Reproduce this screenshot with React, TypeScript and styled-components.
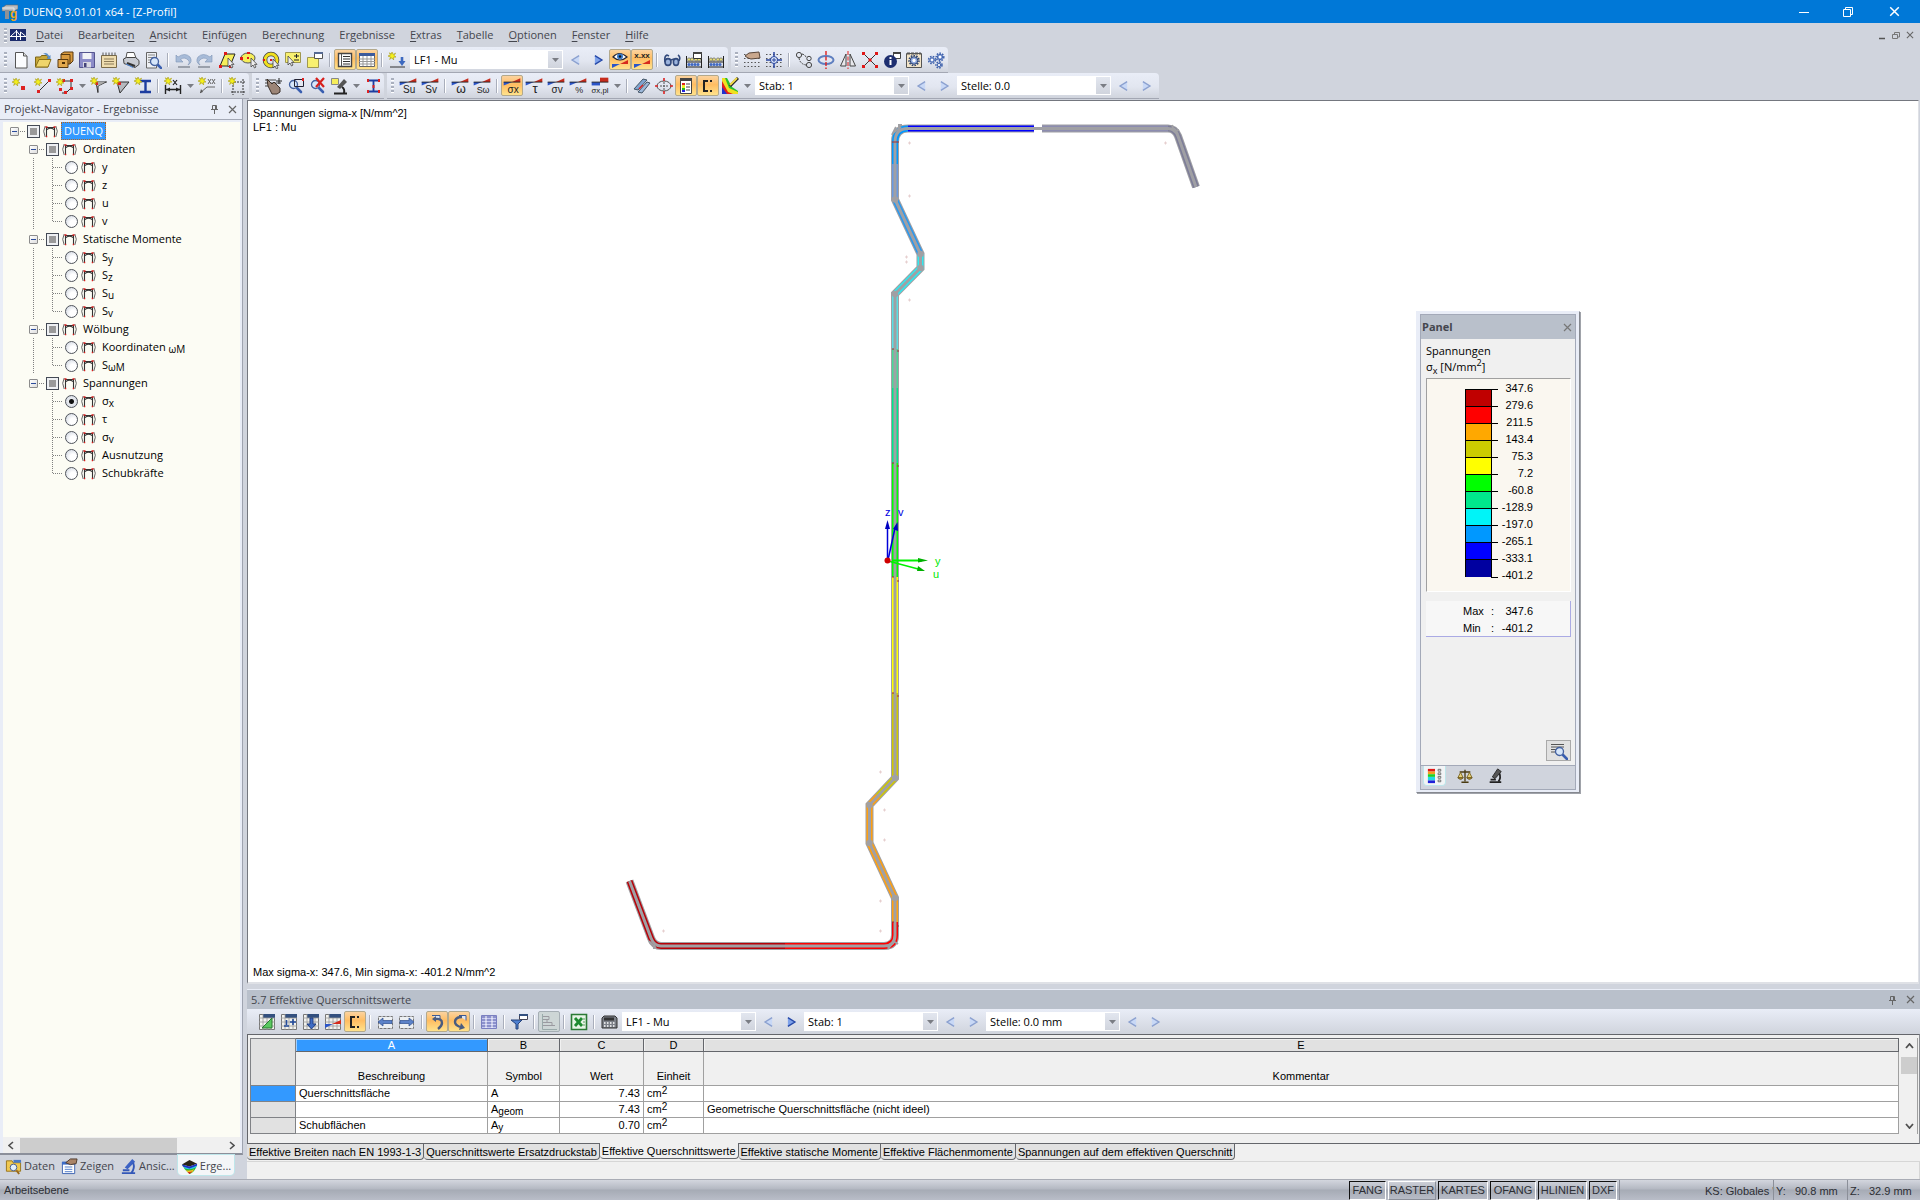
import React from 'react';
import styled, { createGlobalStyle, css } from 'styled-components';

const ui = '"Open Sans", "Noto Sans", sans-serif';
const arial = '"Liberation Sans", Arial, sans-serif';
const chrome = '#d0d4dd';
const face = '#f0f0f0';

const Global = createGlobalStyle`
  *, *::before, *::after { box-sizing: border-box; }
  html, body, #root { height: 100%; }
  body { margin: 0; background: ${chrome}; font: 11px/16px ${ui}; color: #000; overflow: hidden; }
  button, input, select { font: inherit; color: inherit; margin: 0; padding: 0; }
  svg { display: block; flex: none; }
`;

const Shell = styled.div`
  display: flex; flex-direction: column; height: 100vh; min-width: 1240px; overflow: hidden;
`;

/* ---------- title and menu ---------- */
const TitleBar = styled.header`
  flex: none; height: 23px; display: flex; align-items: center; background: #0078d7; color: #fff; padding: 0 2px;
`;
const Title = styled.h1`
  font-size: 11px; font-weight: 400; margin: 0 0 0 5px; padding-top: 1px; flex: 1;
`;
const WinButton = styled.button<{ $w?: number }>`
  width: ${p => p.$w ?? 44}px; height: 100%; border: 0; background: none; display: grid; place-items: center;
`;
const MenuBar = styled.nav`
  flex: none; height: 24px; display: flex; align-items: center; background: ${chrome}; color: #44464e; padding-right: 3px;
`;
const MenuItems = styled.div`
  flex: 1; display: flex; gap: 15px; padding-left: 10px;
`;
const MenuItem = styled.button`
  border: 0; background: none; padding: 0; font-size: 11px; line-height: 20px;
  u { text-underline-offset: 2px; }
`;
const Spacer = styled.div`flex: 1;`;

/* ---------- toolbars ---------- */
const ToolRow = styled.div`
  flex: none; height: 26px; display: flex; gap: 3px; background: ${chrome};
`;
const Bar = styled.div<{ $pad?: number }>`
  display: flex; align-items: center; height: 26px; padding-right: ${p => p.$pad ?? 1}px;
  background: linear-gradient(#e9edf7, #e2e6f0 55%, #d0d4dd);
  border-bottom: 1px solid #a3a7b3; border-radius: 0 4px 0 0;
`;
const Grip = styled.span`
  width: 3px; height: 15px; margin: 0 3px 0 4px; flex: none;
  background: repeating-linear-gradient(#aab0be 0 2px, #fff 2px 3px, transparent 3px 4px);
`;
const Sep = styled.span`
  flex: none; width: 2px; height: 14px; margin: 0 3px; background: #a9aebb; border-right: 1px solid #fff;
`;
const Tool = styled.button<{ $on?: boolean; $grey?: boolean }>`
  flex: none; width: 22px; height: 21px; display: grid; place-items: center; background: none;
  border: 1px solid transparent; border-radius: 2px;
  ${p => p.$on && css`border-color: #b3a98c; background: linear-gradient(#fbd3a0, #ffbd62 45%, #ffe28c);`}
  ${p => p.$grey && css`border-color: #a5aeb4; background: #cdd6d6;`}
`;
const Drop = styled.button`
  flex: none; width: 12px; height: 20px; border: 0; background: none; display: grid; place-items: center;
`;
const Combo = styled.span<{ $w: number }>`
  position: relative; flex: none; width: ${p => p.$w}px; height: 19px; margin: 0 2px; display: flex;
  background: #fff; border: 1px solid #fff;
  select {
    appearance: none; width: 100%; border: 0; outline: 0; background: none; padding-left: 3px; font-size: 11px; line-height: 16px;
  }
`;
const ComboArrow = styled.span`
  position: absolute; right: 0; top: 0; bottom: 0; width: 14px; pointer-events: none;
  display: grid; place-items: center; background: linear-gradient(#e2e6ef, #d0d4dd);
`;

/* ---------- work area ---------- */
const Main = styled.div`flex: 1; min-height: 0; display: flex; gap: 4px; background: ${chrome};`;
const Side = styled.aside`
  width: 243px; flex: none; display: flex; flex-direction: column;
`;
const SideBox = styled.div`
  flex: 1; min-height: 0; display: flex; flex-direction: column; border-right: 1px solid #9ea3b0; border-bottom: 2px solid #8b8f9a; background: #e9edf7;
`;
const SideHead = styled.div`
  height: 21px; flex: none; display: flex; align-items: center; gap: 9px; padding: 0 5px 0 4px; border-bottom: 1px solid #a3a8b5;
  color: #44464e; h2 { font-size: 11px; font-weight: 400; margin: 0; flex: 1; }
`;
const PlainBtn = styled.button`border: 0; background: none; padding: 0; display: grid; place-items: center;`;
const Tree = styled.div`
  flex: 1; margin: 2px 2px 0 3px; background: #fcfcf4; overflow: hidden;
`;
const HScroll = styled.div`
  height: 16px; flex: none; margin: 0 2px 0 3px; padding: 0 2px; gap: 3px; background: ${face}; display: flex; align-items: center;
`;
const Thumb = styled.div`width: 157px; height: 15px; background: #cdcdcd;`;
const SideTabs = styled.div`height: 24px; flex: none; display: flex; align-items: flex-start; padding-left: 2px; color: #44464e;`;
const SideTab = styled.button<{ $on?: boolean }>`
  height: 20px; padding: 2px 3px 0; display: flex; align-items: center; gap: 2px; border: 0; background: none; white-space: nowrap;
  border-radius: 0 0 4px 4px; svg { width: 17px; height: 17px; }
  ${p => p.$on && css`background: #f4f6f8; box-shadow: 0 0 0 1px #bfe6ea;`}
`;

const Row = styled.div`display: flex; align-items: center; height: 18px;`;
const Guide = styled.span<{ $v?: 'full' | 'half' | 'none'; $h?: boolean; $w: number }>`
  flex: none; width: ${p => p.$w}px; height: 18px;
  background-repeat: no-repeat;
  background-image:
    ${p => p.$v === 'none' || !p.$v ? 'none' : 'repeating-linear-gradient(#808080 0 1px, transparent 1px 2px)'},
    ${p => p.$h ? 'repeating-linear-gradient(90deg, #808080 0 1px, transparent 1px 2px)' : 'none'};
  background-position: 11px 0, 12px 9px;
  background-size: 1px ${p => (p.$v === 'half' ? 10 : 18)}px, 10px 1px;
`;
const Expander = styled.button`
  flex: none; width: 9px; height: 9px; border: 1px solid #8c8c8c; border-radius: 1px; background: linear-gradient(135deg, #fff, #ddd);
  display: grid; place-items: center; &::before { content: ''; width: 5px; height: 1px; background: #2b4b9b; }
`;
const ExpCell = styled.span<{ $left: number }>`
  flex: none; display: flex; align-items: center; padding-left: ${p => p.$left}px; padding-top: 1px; padding-right: 1px;
  &::after { content: ''; width: 6px; height: 1px; margin-left: 1px; background: repeating-linear-gradient(90deg, #808080 0 1px, transparent 1px 2px); }
`;
const Check = styled.input`
  appearance: none; flex: none; width: 13px; height: 13px; border: 1px solid #444a55; background: #999; box-shadow: inset 0 0 0 2px #eef0f3;
`;
const Radio = styled.input`
  appearance: none; flex: none; width: 13px; height: 13px; border-radius: 50%; border: 1px solid #50545c;
  background: radial-gradient(circle at 65% 65%, #fff 30%, #c9d0dc);
  &:checked { background: radial-gradient(circle, #111 0 2px, #e8ebf0 3px, #cdd3dd); }
`;
const Label = styled.label<{ $sel?: boolean }>`
  display: flex; align-items: center; gap: 3px; height: 18px; white-space: nowrap; padding-left: 3px; font-size: 11px;
  > span { padding: 0 3px; line-height: 18px; }
  sub { font-size: 10px; line-height: 1px; vertical-align: -2px; }
  ${p => p.$sel && css`> span { background: #3399ff; color: #fff; outline: 1px dotted #b5651d; outline-offset: -1px; }`}
`;

/* ---------- drawing ---------- */
const Right = styled.div`flex: 1; min-width: 0; display: flex; flex-direction: column;`;
const Canvas = styled.section`
  flex: 1; min-height: 0; position: relative; background: #fff; border: 1px solid #74777f; border-right-color: #dfe1e6; border-bottom: 2px solid #dfe1e6; margin-top: 1px; margin-right: 1px;
  font: 11px/14px ${arial};
  > svg { width: 100%; height: 100%; }
`;
const CanvasNote = styled.div<{ $bottom?: boolean }>`
  position: absolute; left: 5px; ${p => (p.$bottom ? 'bottom: 3px' : 'top: 5px')};
`;

const Floating = styled.section`
  position: absolute; right: 338px; top: 210px; width: 164px; height: 482px; display: flex; flex-direction: column;
  background: #e9edf7; border: 1px solid #e9edf7; border-right-color: #85888f; border-bottom-color: #85888f; padding: 2px 3px;
  font: 11px/14px ${arial}; box-shadow: 1px 1px 0 #a0a3aa;
`;
const FloatInner = styled.div`flex: 1; display: flex; flex-direction: column; border: 1px solid #a3a9b8; background: ${face};`;
const FloatHead = styled.div`
  height: 24px; display: flex; align-items: center; justify-content: space-between; background: #b9c0cb; color: #44464e; padding: 0 3px 0 1px;
  h2 { margin: 0; font: 700 11px/16px ${ui}; }
`;
const FloatBody = styled.div`flex: 1; padding: 4px 4px 4px 5px; display: flex; flex-direction: column;`;
const FloatName = styled.div`
  font: 11px/16px ${ui}; sub, sup { font-size: 9px; line-height: 1px; }
`;
const LegendBox = styled.div`
  margin-top: 3px; height: 214px; background: #faf7f0; border: 1px solid #a0a0a0; border-right-color: #fff; border-bottom-color: #fff;
  padding: 10px 37px 0 38px; display: flex; justify-content: space-between;
`;
const Swatches = styled.div`width: 27px; border: 1px solid #000; height: 188px;`;
const Swatch = styled.div<{ $c: string }>`
  height: 17px; background: ${p => p.$c}; border-bottom: 1px solid #000; position: relative;
  &::after { content: ''; position: absolute; left: 25px; bottom: -1px; width: 7px; height: 1px; background: #000; }
  &:first-child::before { content: ''; position: absolute; left: 25px; top: -1px; width: 7px; height: 1px; background: #000; }
  &:last-child { border-bottom: 0; }
`;
const Values = styled.ol`
  list-style: none; margin: -9px 0 0; padding: 0; text-align: right; line-height: 17px;
`;
const MinMax = styled.dl`
  margin: 9px 0 0; height: 36px; padding: 2px 37px 0 37px; background: #f7f7f7; border: solid #aaaae4; border-width: 0 1px 1px 0;
  display: grid; grid-template-columns: 34px 1fr; line-height: 17px; 
  dt { display: flex; justify-content: space-between; padding-right: 3px; white-space: pre; } dd { margin: 0; text-align: right; }
`;
const FindBtn = styled.button`
  margin-top: auto; align-self: flex-end; width: 25px; height: 21px; border: 1px solid #a9a9a9; background: #e1e1e1; display: grid; place-items: center;
`;
const FloatTabs = styled.div`
  height: 24px; background: ${chrome}; border-top: 1px solid #a3a9b8; display: flex; padding-left: 2px; gap: 7px;
`;
const FloatTab = styled.button<{ $on?: boolean }>`
  width: 23px; height: 20px; border: 0; background: none; display: grid; place-items: center; border-radius: 0 0 4px 4px;
  svg { width: 16px; height: 16px; }
  ${p => p.$on && css`background: #f2f4f6; border: 1px solid #bfe6ea; border-top: 0;`}
`;

/* ---------- table panel ---------- */
const Dock = styled.section`flex: none; margin-top: 5px; display: flex; flex-direction: column; background: ${face};`;
const DockHead = styled.div`
  height: 20px; display: flex; align-items: center; gap: 9px; padding: 0 5px 0 4px; background: #b9c0cb; color: #44464e; border-top: 1px solid #e9edf7;
  h2 { margin: 0; flex: 1; font-size: 11px; font-weight: 400; }
`;
const DockBar = styled.div`
  height: 25px; display: flex; align-items: center; padding-left: 9px; background: linear-gradient(#e9edf7, #d0d4dd);
`;
const GridWrap = styled.div`
  display: flex; height: 110px; padding: 3px 1px 0 2px; border: 1px solid #64666b; border-right-color: #8b8d92; gap: 2px;
`;
const Table = styled.table`
  flex: 1; border-collapse: collapse; table-layout: fixed; font: 11px/14px ${arial}; background: #fff; height: 96px;
  td, th { border: 1px solid #a0a0a0; padding: 0 3px; font-weight: 400; height: 16px; white-space: nowrap; overflow: hidden; line-height: 13px; }
  sub, sup { font-size: 10px; line-height: 1px; }
  sub { vertical-align: -2px; } sup { vertical-align: 3px; }
`;
const Letter = styled.th<{ $on?: boolean }>`
  && { height: 13px; line-height: 12px; border-color: #64666b; }
  background: ${p => (p.$on ? '#3399ff' : '#e1e1e1')}; color: ${p => (p.$on ? '#fff' : '#000')};
  box-shadow: inset 1px 1px 0 #fff8;
`;
const HeadCell = styled.th`&& { height: 34px; padding-bottom: 2px; } background: ${face}; vertical-align: bottom;`;
const RowHead = styled.th<{ $on?: boolean }>`
  background: ${p => (p.$on ? '#3399ff' : '#e1e1e1')}; && { border-color: #808286; }
`;
const Corner = styled.th`background: #e1e1e1; && { border-color: #808286; }`;
const Num = styled.td`text-align: right;`;
const VScroll = styled.div`
  width: 17px; flex: none; height: 96px; display: flex; flex-direction: column; align-items: center; justify-content: space-between; background: ${face};
  padding: 5px 0; border-right: 1px solid #a0a0a0;
`;
const VThumb = styled.div`width: 16px; height: 17px; background: #cdcdcd; margin-bottom: 42px;`;
const SheetTabs = styled.div`height: 18px; display: flex; align-items: flex-start; border-bottom: 1px solid #d6d6d6; font: 11px/14px ${arial};`;
const SheetTab = styled.button<{ $on?: boolean }>`
  height: 16px; border: 1px solid #64666b; border-top: 0; border-left: 0; padding: 0 2px; background: #e1e1e1; white-space: nowrap;
  border-radius: 0 0 4px 4px;
  ${p => p.$on && css`background: ${face}; margin-top: -1px;`}
`;
const DockFoot = styled.div`height: 17px; border-right: 1px solid #d6d6d6;`;

/* ---------- status ---------- */
const Status = styled.footer`
  flex: none; height: 21px; display: flex; align-items: stretch; border-top: 1px solid #a9acb5;
  background: linear-gradient(#d3d6de, #b4b8c2 45%, #a6abb5 50%, #b9bdc8); font: 11px/19px ${arial}; color: #2c2e34;
`;
const StatusText = styled.span`flex: 1; padding: 2px 4px 0; line-height: 17px;`;
const Mode = styled.button<{ $w: number; $up?: boolean }>`
  width: ${p => p.$w}px; height: 19px; margin: 1px 2px 0 0; background: none; text-align: center; white-space: nowrap;
  border: 1px solid; border-color: ${p => (p.$up ? '#fff #8b8f99 #8b8f99 #fff' : '#111 #fff #fff #111')};
  line-height: 17px;
`;
const Coord = styled.span<{ $w: number; $pad: number }>`
  width: ${p => p.$w}px; padding: 3px 0 0 ${p => p.$pad}px; line-height: 16px; border-left: 1px solid #8b8f99; white-space: pre;
`;

/* ---------- icons ---------- */
const Svg = ({ children, s = 18, ...r }: { children: React.ReactNode; s?: number } & React.SVGProps<SVGSVGElement>) => (
  <svg width={s} height={s} viewBox="0 0 18 18" fill="none" aria-hidden="true" {...r}>{children}</svg>
);
const Star = ({ x = 0, y = 0 }) => (
  <path transform={`translate(${x} ${y})`} d="M4 0l1 2.400L7.600 1.200 6 3.600 8 5 5.600 5.200 5.600 8 4 5.800 1.600 7.400 2.600 5 0 4 2.400 3.200 1.400.800 3.400 2z" fill="#f4f01a" stroke="#a79b10" strokeWidth=".6" />
);
const Result = ({ t, size = 9 }: { t: string; size?: number }) => (
  <Svg s={20}>
    <path d="M9 5.500h7.500V2z" fill="#c62b1c" /><path d="M1.500 5.500H9L1.500 8.500z" fill="#2b55c8" /><path d="M1.500 5.500h15" stroke="#222" strokeWidth=".8" />
    <text x="10" y="15" textAnchor="middle" fontFamily={arial} fontSize={size} fill="#222">{t}</text>
  </Svg>
);
const Lens = ({ x = 0, y = 0 }) => (
  <g transform={`translate(${x} ${y})`}><path d="M8.500 8.500L13 13" stroke="#3a5fb0" strokeWidth="2.600" strokeLinecap="round" /><circle cx="5.500" cy="5.500" r="4" fill="#d6e6fa" stroke="#44619f" strokeWidth="1.300" /></g>
);
const Sheet = ({ children }: { children?: React.ReactNode }) => (
  <Svg><path d="M1.500 1.500h15v15h-15z" fill="#f2f2ee" stroke="#777" /><path d="M5 1h12v4H5z" fill="#33507f" /><path d="M1 5h16M1 9h16M1 13h16M5 1v16M9 5v12M13 5v12" stroke="#999" strokeWidth=".8" />{children}</Svg>
);
const Abacus = () => (
  <g><path d="M1.500 5v12M16.500 5v12M1 11h16M1 16h16" stroke="#222" />
    {[4, 7, 10, 13].map(x => <circle key={x} cx={x} cy="13.500" r="1.500" fill="#3f68c4" />)}
    {[4, 7, 11, 14].map(x => <circle key={x} cx={x} cy="8.500" r="1.600" fill="#e9e07a" stroke="#555" strokeWidth=".6" />)}</g>
);
const Dots = () => (
  <path d="M1 3.500h16M1 7.500h16M1 11.500h16M1 15.500h16" stroke="#555" strokeDasharray="1.500 2" />
);
const Gear = ({ x, y, r, c = '#3f62ad' }: { x: number; y: number; r: number; c?: string }) => (
  <g><circle cx={x} cy={y} r={r} stroke={c} strokeWidth="1.500" strokeDasharray="1.600 1.200" /><circle cx={x} cy={y} r={r - 1.2} fill="#8ea7dc" stroke={c} /><circle cx={x} cy={y} r={r / 3} fill="#fff" /></g>
);
const Cursor = ({ x = 0, y = 0 }) => (
  <path transform={`translate(${x} ${y})`} d="M0 0v9l2-2 1.500 3 1.500-1-1.500-2.600H6z" fill="#eee" stroke="#444" strokeWidth=".8" />
);
const Tri = ({ dir, on }: { dir: 'l' | 'r'; on?: boolean }) => (
  <Svg s={14}>
    <path d={dir === 'l' ? 'M13 3.500L4 9l9 5.500z' : 'M5 3.500L14 9l-9 5.500z'} fill={on ? '#7fa2ea' : '#c8d8f6'} />
    <path d={dir === 'l' ? 'M13 3.500L4 9l9 5.500' : 'M5 3.500L14 9l-9 5.500'} stroke={on ? '#2548a8' : '#8ba0cf'} strokeWidth="1.800" />
  </Svg>
);
const DropMark = () => <svg width="7" height="4" viewBox="0 0 7 4" aria-hidden="true"><path d="M0 0h7L3.500 4z" fill="#7a7d84" /></svg>;
const Profile = () => (
  <svg width="15" height="13" viewBox="0 0 15 13" fill="none" aria-hidden="true">
    <path d="M3.500 12V2.500h8V12M4 4.500q3.500-2.500 7 0" stroke="#333" strokeWidth="1.100" />
    <path d="M2.200 1Q-.8 6 2.200 12M12.800 1Q15.800 6 12.800 12" stroke="#666" /><path d="M2.500 2h2M10.500 2h2M3 11.500h1.200M10.800 11.500h1.200" stroke="#e01818" strokeWidth="1.600" />
  </svg>
);

const icons: Record<string, React.ReactNode> = {
  new: <Svg><path d="M3.500 1.500h8l3.500 3.500v12H3.500z" fill="#fbfcfe" stroke="#555" /><path d="M11.500 1.500V5H15" stroke="#555" fill="#ddd" /></Svg>,
  open: <Svg><path d="M1.500 6h5l1-1.500H14V16H1.500z" fill="#c8a83a" stroke="#7d6517" /><path d="M1.500 16L5 8.500h12L14 16z" fill="#efd56b" stroke="#8a7018" /><path d="M9 3q4-3 6 2l1.500-1v4h-4L14 6.500Q12 2.500 9 3z" fill="#5b8fc9" /></Svg>,
  cabinet: <Svg><path d="M5 3l3-2h9v9l-3 3H5z" fill="#d89a3e" stroke="#59390e" /><path d="M5 3.500h9V13" stroke="#59390e" /><path d="M2 8.500h10v8H2z" fill="#e3a84c" stroke="#59390e" /><path d="M6 12h3" stroke="#4a2d06" strokeWidth="2" /></Svg>,
  save: <Svg><path d="M1.500 1.500h15v15h-15z" fill="#8c8cc8" stroke="#55558f" /><path d="M4.500 2h9v6h-9z" fill="#f2f2f6" /><path d="M5 11h8v5.500H5z" fill="#d8d8e2" /><path d="M6 12h2.500v4H6z" fill="#44447a" /></Svg>,
  notes: <Svg><path d="M1.500 4.500h15v12h-15z" fill="#eedcae" stroke="#7b6b48" /><path d="M3 4.500v-3M6 4.500v-3M9 4.500v-3M12 4.500v-3M15 4.500v-3" stroke="#555" /><path d="M4 8h10M4 10.500h10M4 13h10" stroke="#8b7b58" /></Svg>,
  print: <Svg><path d="M4 7l1-5.500h7L14 7" fill="#fff" stroke="#555" /><path d="M1.500 8l3-1.500h9l3.500 3v4l-4 3-11-4z" fill="#c8cbd2" stroke="#444" /><path d="M5 12l8 3" stroke="#333" strokeWidth="2" /><path d="M4 13l7 3.500" stroke="#4e8ae0" /></Svg>,
  preview: <Svg><path d="M2.500 1.500h10V17h-10z" fill="#eef0f4" stroke="#666" /><path d="M4 4h7M4 6.500h7M4 9h4M4 11.500h3" stroke="#888" /><Lens x={5} y={5} /></Svg>,
  undo: <Svg><path d="M2 4v7h7L6.500 8.500Q11 5 15 10q1 2-1 4 5-3 2-8-5-5-12 0z" fill="#a7bbd8" stroke="#7e93b5" strokeWidth=".6" /><path d="M4 16h12" stroke="#9aa0ab" strokeWidth="2" /></Svg>,
  redo: <Svg><path d="M16 4v7H9l2.500-2.500Q7 5 3 10q-1 2 1 4-5-3-2-8 5-5 12 0z" fill="#a7bbd8" stroke="#7e93b5" strokeWidth=".6" /><path d="M2 16h12" stroke="#9aa0ab" strokeWidth="2" /></Svg>,
  para: <Svg><path d="M2 15L7 3h10l-5 12z" fill="#f6ee5a" stroke="#222" /><path d="M1 14h3v3H1zM11 14h3v3h-3zM6 1h3v3H6z" fill="#e01818" /><Cursor x={10} y={7} /></Svg>,
  ellipse: <Svg><ellipse cx="8" cy="7" rx="7" ry="5" fill="#f6ee5a" stroke="#555" /><path d="M0 6h3v3H0zM7 1h3v2H7zM7 6h2v2H7z" fill="#e01818" /><Cursor x={11} y={7} /></Svg>,
  ring: <Svg><circle cx="9" cy="9" r="6" stroke="#444" strokeWidth="4.600" /><circle cx="9" cy="9" r="6" stroke="#f0e020" strokeWidth="3" /><path d="M8 8h2v2H8zM1 8h2v2H1z" fill="#e01818" /><Cursor x={11} y={8} /></Svg>,
  boxcur: <Svg><path d="M1.500 1.500h15v10h-15z" fill="#f8f070" stroke="#a09850" /><path d="M10 5h5M12.500 3v4M10 9h5" stroke="#222" /><Cursor x={4} y={5} /></Svg>,
  notewin: <Svg><path d="M1.500 6.500h11v10h-11z" fill="#f8f070" stroke="#a09850" /><path d="M8.500 1.500h8v6h-8z" fill="#fff" stroke="#555" /><path d="M8 1h9v2H8z" fill="#556a94" /></Svg>,
  list: <Svg><path d="M2.500 2.500h13v13h-13z" fill="#fff" stroke="#444" strokeWidth="1.400" /><path d="M5.500 3v12" stroke="#555" /><path d="M7 5.500h7M7 8h7M7 10.500h7M7 13h7" stroke="#333" /></Svg>,
  table: <Svg><path d="M1.500 2.500h15v13h-15z" fill="#fff" stroke="#666" /><path d="M1 2h16v3H1z" fill="#3d5b9c" /><path d="M1 8h16M1 10.500h16M1 13h16M5 5v10M9 5v10M13 5v10" stroke="#999" /></Svg>,
  loadcase: <Svg><Star x={0} y={1} /><path d="M14 6v6" stroke="#3c69c0" strokeWidth="2.600" /><path d="M10.500 10h7L14 15z" fill="#3c69c0" /><path d="M2 16h15" stroke="#333" /></Svg>,
  eye: <Svg><path d="M2 6q6-7 14 0-7 6-14 0z" fill="#fff" stroke="#223" strokeWidth="1.200" /><circle cx="9" cy="5.500" r="3" fill="#3c7ac8" /><circle cx="9" cy="5.500" r="1.200" fill="#111" /><path d="M9 13h8v-4z" fill="#d62b1c" /><path d="M1 13h8l-8 4z" fill="#2b55c8" /></Svg>,
  xxx: <Svg><text x="9" y="7" textAnchor="middle" fontFamily={arial} fontWeight="700" fontSize="8" fill="#222">x.xx</text><path d="M9 13h8V9z" fill="#d62b1c" /><path d="M1 13h8l-8 4z" fill="#2b55c8" /></Svg>,
  glasses: <Svg><path d="M2 11Q1 5 4 4l2 1M16 10q2-4-1-6" stroke="#334a7c" strokeWidth="1.600" /><ellipse cx="5" cy="11" rx="3" ry="3.400" fill="#9bb3dd" stroke="#334a7c" strokeWidth="1.600" /><path d="M8 9l3-1" stroke="#334a7c" strokeWidth="1.600" /><ellipse cx="13" cy="11" rx="2.600" ry="3.400" fill="#9bb3dd" stroke="#334a7c" strokeWidth="1.600" /></Svg>,
  abwin: <Svg><Abacus /><path d="M8.500 1.500h8v6h-8z" fill="#fff" stroke="#333" /><path d="M8 1h9v2H8z" fill="#444" /></Svg>,
  abacus: <Svg><Abacus /></Svg>,
  handgrid: <Svg><Dots /><path d="M2 5l4-3 10-1 1 6-9 1-3-1z" fill="#c9a78d" stroke="#59463a" /></Svg>,
  cross: <Svg><Dots /><path d="M9 1v16M1 9h16" stroke="#2846a0" strokeWidth="1.500" /><circle cx="9" cy="9" r="3.500" fill="#dfe8fb" stroke="#2846a0" /><path d="M9 7v4M7 9h4" stroke="#2846a0" /></Svg>,
  copy: <Svg><circle cx="4" cy="4" r="2.600" stroke="#444" /><circle cx="14" cy="14" r="2.600" stroke="#444" /><circle cx="14" cy="7.500" r="2.200" stroke="#444" /><path d="M7 3q4 1 4 4M4 7q1 6 7 7" stroke="#444" strokeDasharray="2 1" /></Svg>,
  rotate: <Svg><ellipse cx="9" cy="9" rx="7.500" ry="4" stroke="#5f7fc0" strokeWidth="2" /><path d="M9 0v18" stroke="#e02020" strokeDasharray="4 1.500" strokeWidth="1.400" /></Svg>,
  mirror: <Svg><path d="M7 3v12H1.500zM11 3v12h5.500z" stroke="#444" fill="#e8e8ec" /><path d="M9 0v18" stroke="#e02020" strokeDasharray="4 1.500" /></Svg>,
  nodes: <Svg><path d="M2 2l14 14M16 2L2 16" stroke="#333" /><path d="M1 1h3v3H1zM14 1h3v3h-3zM1 14h3v3H1zM14 14h3v3h-3zM7.500 7.500h3v3h-3z" fill="#e01818" /></Svg>,
  info: <Svg><path d="M10.500 1.500h7v6h-7z" fill="#fff" stroke="#444" /><path d="M10 1h8v2h-8z" fill="#444" /><circle cx="7.500" cy="10.500" r="6.500" fill="#1d2e70" /><path d="M7.500 9v5M7.500 6v2" stroke="#fff" strokeWidth="2" /></Svg>,
  geardoc: <Svg><path d="M1.500 2.500h15v14h-15z" fill="#f2e4c8" stroke="#555" /><path d="M2 2.500h14" stroke="#555" strokeWidth="2" strokeDasharray="3 1" /><Gear x={9} y={9.5} r={5} c="#2c4373" /></Svg>,
  gears: <Svg><Gear x={5} y={9} r={3.5} /><Gear x={13} y={6} r={3.8} /><Gear x={12} y={14} r={3} /></Svg>,
  node: <Svg><Star x={0} y={1} /><path d="M9 9h4v4H9z" fill="#d22" /></Svg>,
  line: <Svg><path d="M4 15L16 3" stroke="#333" /><path d="M3 13h3v3H3zM14 2h3v3h-3z" fill="#d22" /><Star y={1} /></Svg>,
  poly: <Svg><path d="M8 4h7v7l-5 5H6" stroke="#333" /><path d="M6 2h3v3H6zM14 2h3v3h-3zM14 10h3v3h-3zM8 14h3v3H8zM3 11h3v3H3z" fill="#d22" /><Star y={1} /></Svg>,
  tri1: <Svg><path d="M5 5h12M6 5l2 11M8 15V9l8-4" stroke="#333" /><path d="M6 5h9L8 9z" fill="#aaa" /><path d="M5 5h3v3H5z" fill="#d22" /><Star /></Svg>,
  tri2: <Svg><path d="M5 5h12L8 16z" fill="#b5b8be" stroke="#333" /><path d="M5 5h4v3H5z" fill="#d22" /><Star /></Svg>,
  ibeam: <Svg><path d="M6 4h11M6 15h11" stroke="#1d3da0" strokeWidth="2.600" /><path d="M11.500 4v11" stroke="#1d3da0" strokeWidth="2.400" /><Star /></Svg>,
  dim: <Svg><path d="M1.500 8v9M16.500 8v9M2 12.500h14" stroke="#222" strokeWidth="1.400" /><path d="M2 12.500l4-2v4zM16 12.500l-4-2v4z" fill="#222" /><path d="M9 3l4 5M13 3L9 8" stroke="#222" strokeWidth="1.200" /><Star /></Svg>,
  arrowxx: <Svg><path d="M10 2l3 5M13 2l-3 5M14 2l3 5M17 2l-3 5M17 10H9L2 16" stroke="#666" /><path d="M2 16l1-4 2 3z" fill="#555" /><Star /></Svg>,
  frame: <Svg><path d="M3 5h15M3 15h15M5 2v16M15 2v16" stroke="#333" strokeDasharray="2 1" /><Star /></Svg>,
  hand: <Svg><path d="M1 3h11M1 6h16M1 9h11" stroke="#444" /><path d="M3 2l5 5 2-2 3 3 3 3v4l-3 2H8L4 9z" fill="#9c8577" stroke="#3a2f28" /><path d="M15 1v6M12 4h6" stroke="#222" /></Svg>,
  zoomwin: <Svg><Lens x={2} y={2} /><path d="M8.500 2.500h9v7h-9z" stroke="#223" /><path d="M16 1h2v3h-2z" fill="#d22" /></Svg>,
  zoomx: <Svg><Lens x={2} y={2} /><path d="M8 1l8 9M16 1L8 10" stroke="#d8201c" strokeWidth="2.200" /></Svg>,
  scope: <Svg><path d="M1.500 1.500h7v6h-7z" fill="#f6ee5a" stroke="#888" /><path d="M14 2l3 3-7 7-3-2z" fill="#555" /><path d="M4 16.500h13M12 10q3 2 2 6" stroke="#222" strokeWidth="2" /></Svg>,
  ired: <Svg><path d="M4 3.500h11M4 14.500h11M9.500 3v12" stroke="#1d3da0" strokeWidth="1.800" /><path d="M3 2h2v3H3zM14 2h2v3h-2zM3 13h2v3H3zM14 13h2v3h-2zM8.500 8h2v3h-2z" fill="#d22" /></Svg>,
  su: <Result t="Su" />, sv: <Result t="Sv" />, om: <Result t="ω" size={11} />, som: <Result t="Sω" size={8} />,
  sx: <Result t="σx" />, tau: <Result t="τ" size={12} />, sigv: <Result t="σv" />, pct: <Result t="%" size={8} />,
  pl: <Svg s={20}><path d="M9 1.500h7.500v4H9z" fill="#c62b1c" /><path d="M1.500 5.500H9v3H1.500z" fill="#2b55c8" /><path d="M1.500 5.500h15" stroke="#222" strokeWidth=".8" /><text x="9" y="15" textAnchor="middle" fontFamily={arial} fontSize="7" fill="#222">σx,pl</text></Svg>,
  plates: <Svg><path d="M1 12L10 2l4 1L5 13z" fill="#7fa4cf" stroke="#456" /><path d="M5 15l9-10 3 1-8 10z" fill="#9cb8da" stroke="#456" /><path d="M6 12l4-4" stroke="#d22" strokeWidth="1.500" /></Svg>,
  oval: <Svg><ellipse cx="9" cy="9" rx="7" ry="5" stroke="#555" /><path d="M9 1v3M9 14v3M0 9h3M15 9h3" stroke="#d22" strokeWidth="1.600" /><path d="M9 5v8M5 9h8" stroke="#555" strokeDasharray="2 1" /></Svg>,
  legend: <Svg><path d="M3.500 2.500h11v14h-11z" fill="#fff" stroke="#444" /><path d="M3 1h12v3H3z" fill="#444" /><path d="M5 6h3v2H5z" fill="#d22" /><path d="M5 8h3v3H5z" fill="#ee2" /><path d="M5 11h3v2H5z" fill="#2b2" /><path d="M5 13h3v2H5z" fill="#22d" /><path d="M9 7h4M9 10h4M9 13h4" stroke="#444" /></Svg>,
  bracket: <Svg><path d="M13 4h-2M9 4H5v10h4M11 14h2" stroke="#222" strokeWidth="2" /></Svg>,
  rainbow: <Svg><path d="M1 1h5l5 9 6 4v3H1z" fill="#2cc02c" /><path d="M1 1h3l4 10 9 4v2H1z" fill="#f0e020" /><path d="M1 4l6 11 5 2H1z" fill="#e02020" /><path d="M1 10l5 7H1z" fill="#2030d0" /><path d="M17 1L9 9" stroke="#222" strokeWidth="3" /><path d="M16 1L9 8" stroke="#f2dc4a" strokeWidth="2" /></Svg>,
  t1: <Sheet><path d="M4 15L14 5v10z" fill="#5ac860" stroke="#2a7a30" /></Sheet>,
  t2: <Sheet><path d="M4 13h5M6.500 7v5M10 9h6M13 6v6" stroke="#234b9b" strokeWidth="1.600" /></Sheet>,
  t3: <Sheet><path d="M8 5h3v6h3l-4.500 5L5 11h3z" fill="#3f6cc4" stroke="#223f80" /></Sheet>,
  t4: <Sheet><path d="M8 11h9V7z" fill="#d62b1c" /><path d="M1 11h8l-8 4z" fill="#2b55c8" /></Sheet>,
  left: <Svg><path d="M2.500 3.500h14v12h-14z" fill="#eceff2" stroke="#777" strokeDasharray="3 1" /><path d="M2 9l5-4v2.500h9v3H7V13z" fill="#5c82c8" stroke="#2d4c8c" strokeWidth=".7" /></Svg>,
  right: <Svg><path d="M1.500 3.500h14v12h-14z" fill="#eceff2" stroke="#777" strokeDasharray="3 1" /><path d="M16 9l-5-4v2.500H2v3h9V13z" fill="#5c82c8" stroke="#2d4c8c" strokeWidth=".7" /></Svg>,
  jump1: <Svg><path d="M4 2.500h8v5" fill="#dfe6f2" stroke="#3c5a94" /><path d="M7 6q7-1 7 4 0 3-4 6" stroke="#4a5c80" strokeWidth="2.400" /><path d="M8 3v6L4 6z" fill="#4a5c80" /></Svg>,
  jump2: <Svg><path d="M9 2.500h7v5" fill="#dfe6f2" stroke="#3c5a94" /><path d="M12 4q-7 0-7 5 0 3 5 5" stroke="#4a5c80" strokeWidth="2.400" /><path d="M9 17l6-2-4-5z" fill="#4a5c80" /></Svg>,
  grid: <Svg><path d="M1.500 2.500h15v13h-15z" fill="#c6c9f0" stroke="#7a7fc0" /><path d="M1 4h16M1 7h16M1 10h16M1 13h16" stroke="#7a7fc0" strokeWidth="1.400" /><path d="M6 3v12M12 3v12" stroke="#fff" /></Svg>,
  funnel: <Svg><path d="M1 7h11l-4 4v5H6v-5z" fill="#4d7fd0" stroke="#26447d" /><path d="M9.500 1.500h8v5h-8z" fill="#fff" stroke="#445" /><path d="M9 1h9v2H9z" fill="#33507f" /></Svg>,
  bars: <Svg><path d="M2.500 1v15.500H17" stroke="#9aa" /><path d="M3 3.500h6v3H3M3 6.500h4v3H3M3 9.500h9v3H3M3 12.500h12" stroke="#9a9aa0" /></Svg>,
  excel: <Svg><path d="M1.500 1.500h15v15h-15z" fill="#e6f4e6" stroke="#2b7a35" strokeWidth="1.600" /><path d="M5 5l7 8M12 5l-7 8" stroke="#1e8a30" strokeWidth="2.800" /><path d="M13 6h2M13 9h2M13 12h2" stroke="#5a9a60" /></Svg>,
  calc: <Svg><path d="M2 5l2-2h11l2 2v10H2z" fill="#7c8088" stroke="#333" /><path d="M4 4.500h10v3H4z" fill="#333" /><path d="M4 10h12M4 13h12" stroke="#fff" strokeWidth="1.500" strokeDasharray="1.500 1.500" /></Svg>,
  daten: <Svg><path d="M1.500 3h6l1 2h8v9h-15z" fill="#f0c850" stroke="#98741c" /><path d="M9 2h8v3H9z" fill="#4c7ac4" /><circle cx="9" cy="10" r="3.500" fill="#e3effc" stroke="#445a8c" /><path d="M12 13l3 4" stroke="#9c6a1c" strokeWidth="2" /></Svg>,
  zeigen: <Svg><path d="M1.500 4.500h13v12h-13z" fill="#fff" stroke="#3a62b0" /><path d="M1 4h14v3H1z" fill="#3c6cc8" /><path d="M4 9.500h8M4 12h8M4 14.500h8" stroke="#4a78c8" /><path d="M5 5l5-4h7l-1 5-6 1z" fill="#a98468" stroke="#4e3a2c" /></Svg>,
  ansicht: <Svg><path d="M13 1l3 3-8 8-3-2z" fill="#3c62c4" /><path d="M2 16h14M14 5q2 6-2 11M3 13h7" stroke="#3458b8" strokeWidth="2" /></Svg>,
  erge: <Svg><path d="M1 7l3 5 5 5q6-2 8-10l-8 3z" fill="#2bb82b" /><path d="M2 8q7 3 15-1l-1 3q-6 3-12 1z" fill="#28c8e8" /><path d="M5 13q4 1 9-1l-2 3q-2 1-5 0z" fill="#f0c020" /><path d="M7 15q3 0 5-1l-3 3z" fill="#e02020" /><path d="M9 2l8 4-8 3-8-2z" fill="#2a2418" /><path d="M1 7l8 2 8-3v2L9 11 2 9z" fill="#2030c8" /></Svg>,
  colors: <Svg><path d="M1 1h8v3H1z" fill="#e01818" /><path d="M1 4h8v3H1z" fill="#f0a020" /><path d="M1 7h8v3H1z" fill="#20d020" /><path d="M1 10h8v4H1z" fill="#20d8e8" /><path d="M1 14h8v3H1z" fill="#2020d8" /><path d="M12.500 1.500h3v2h-3zM12.500 5.500h3v2h-3zM12.500 9.500h3v2h-3zM12.500 13.500h3v2h-3z" stroke="#666" /></Svg>,
  scale: <Svg><path d="M9 2v13M3 4.500h12M5 16h8" stroke="#4a3a10" strokeWidth="1.500" /><path d="M4 5l-3 6h6zM14 5l-3 6h6z" stroke="#7a6420" fill="#e8d27a" /><path d="M1 11h6q-3 4-6 0zM11 11h6q-3 4-6 0z" fill="#b08c28" stroke="#4a3a10" strokeWidth=".6" /></Svg>,
  micro: <Svg><path d="M12 1l4 3-7 8-3-2z" fill="#555" stroke="#222" /><path d="M3 16h13M14 6q2 5-1 9M4 13h6" stroke="#222" strokeWidth="2" /></Svg>,
  find: <Svg><path d="M1 2.500h13M1 5h13M1 7.500h9M1 10h6" stroke="#555" /><Lens x={4} y={4} /></Svg>,
};

const Pin = () => <svg width="9" height="10" viewBox="0 0 9 10" fill="none" aria-hidden="true"><path d="M2.500 5V1.500h4V5M5.500 2v3M1 5.500h7M4.500 6v4" stroke="#666" /></svg>;
const Cross = ({ s = 9, c = '#666' }) => <svg width={s} height={s} viewBox="0 0 9 9" aria-hidden="true"><path d="M1 1l7 7M8 1L1 8" stroke={c} strokeWidth="1.200" /></svg>;

/* '|' separator, '^' drop mark, leading '*' pressed, leading '~' disabled */
const Tools = ({ items }: { items: string }) => (
  <>
    {items.split(' ').map((it, i) => {
      if (it === '|') return <Sep key={i} />;
      if (it === '^') return <Drop key={i} aria-label="Mehr"><DropMark /></Drop>;
      const name = it.replace(/^[*~]/, '');
      return <Tool key={i} aria-label={name} $on={it[0] === '*'} $grey={it[0] === '~'}>{icons[name]}</Tool>;
    })}
  </>
);
const Picker = ({ value, w, label, next }: { value: string; w: number; label: string; next?: boolean }) => (
  <>
    <Combo $w={w}>
      <select aria-label={label} defaultValue={value}><option>{value}</option></select>
      <ComboArrow><DropMark /></ComboArrow>
    </Combo>
    <Tool aria-label="Zurück"><Tri dir="l" /></Tool>
    <Tool aria-label="Weiter"><Tri dir="r" on={next} /></Tool>
  </>
);

const menu: [string, string, string][] = [
  ['', 'D', 'atei'], ['Bearbeite', 'n', ''], ['', 'A', 'nsicht'], ['E', 'i', 'nfügen'], ['Be', 'r', 'echnung'], ['Er', 'g', 'ebnisse'],
  ['', 'E', 'xtras'], ['', 'T', 'abelle'], ['', 'O', 'ptionen'], ['', 'F', 'enster'], ['', 'H', 'ilfe'],
];

const tree: { name: string; items: [string, string?][] }[] = [
  { name: 'Ordinaten', items: [['y'], ['z'], ['u'], ['v']] },
  { name: 'Statische Momente', items: [['S', 'y'], ['S', 'z'], ['S', 'u'], ['S', 'v']] },
  { name: 'Wölbung', items: [['Koordinaten ', 'ωM'], ['S', 'ωM']] },
  { name: 'Spannungen', items: [['σ', 'x'], ['τ'], ['σ', 'v'], ['Ausnutzung'], ['Schubkräfte']] },
];

const legendColors = ['#c00000', '#ff0000', '#ffa800', '#cccc00', '#ffff00', '#00ff00', '#00e88c', '#00f4f8', '#0098ff', '#0000ff', '#0000a0'];
const legendValues = ['347.6', '279.6', '211.5', '143.4', '75.3', '7.2', '-60.8', '-128.9', '-197.0', '-265.1', '-333.1', '-401.2'];

const outline = 'M629.500 881L651 938Q654 946 661 946H884Q895 946 895 935V898L869.500 843V805L895 778V294L920.500 268V254L895 199.500V142Q895 128.500 908 128.500H1034M1042 128.500H1168Q1175 128.500 1178 136L1196 187';
const stresses: [string, string][] = [
  ['M629.500 881L651 938Q654 946 661 946H785', '#b80008'],
  ['M785 946H884Q895 946 895 935V922', '#ff0000'],
  ['M895 922V898L869.500 843V805L878 796', '#ffa010'],
  ['M878 796L895 778V693', '#cfc800'],
  ['M895 693V577', '#ffff00'],
  ['M895 577V463', '#00ff00'],
  ['M895 463V388', '#00e68a'],
  ['M895 388V349', '#48d898'],
  ['M895 349V294', '#58dfe2'],
  ['M895 294L920.500 268V254', '#30e8ee'],
  ['M920.500 254L895 199.500', '#2898f0'],
  ['M895 199.500V164', '#6a9ae0'],
  ['M895 164V142Q895 128.500 908 128.500', '#0098ff'],
  ['M908 128.500H1034', '#0000ff'],
  ['M1042 128.500H1168', '#8c8cb0'],
  ['M1168 128.500Q1175 128.500 1178 136L1196 187', '#7c7c98'],
];
const marks = [[909, 143], [1165, 143], [909, 196], [906, 257], [906, 262], [909, 300], [880, 772], [884, 810], [884, 840], [880, 901], [880, 931], [663, 931]];
const kinks = [[895, 199.5], [920.5, 254], [920.5, 268], [895, 294], [895, 778], [869.5, 805], [869.5, 843], [895, 898]];

const Section = () => (
  <svg viewBox="248 101 1670 881" preserveAspectRatio="xMidYMid meet" fill="none" role="img" aria-label="Z-Profil">
    <path d={outline} stroke="#a0a0a4" strokeWidth="8" />
    {stresses.map(([d, c]) => <path key={d} d={d} stroke={c} strokeWidth="6" />)}
    <path d="M895 142Q895 133 901 129h8q-10 0-11 13z" fill="#0098ff" />
    <path d="M884 948q10-2 14-14l-3-2q-2 10-13 12z" fill="#ff0000" />
    <path d={outline} stroke="#a0a0a4" strokeWidth="3" />
    <path d="M1034 128.500h8" stroke="#a0a0a4" strokeWidth="3" />
    {kinks.map(([x, y]) => <circle key={`${x}-${y}`} cx={x} cy={y} r="3.200" fill="#a0a0a4" />)}
    <path d="M896 127l-4 8M902 125h-3v6M893 133l8-6M1172 125l2 6 5-1M1174 128l4 6M651 944l-2-3M650 942l6 6M654 945v4M888 949l4-5M893 941l5 3M887 947l8-6" stroke="#a0a0a4" strokeWidth="2" />
    <path d="M892 463h2M897 466h2M892 349h2M897 351h2M892 577h2M897 581h2M892 693h2M897 696h2M892 142h7M892 922h2M897 926h2" stroke="#a03030" />
    {marks.map(([x, y]) => <path key={`${x}-${y}`} d={`M${x - 1} ${y}h3M${x + 0.5} ${y - 1.5}v3`} stroke="#e6cfcf" />)}
    <path d="M892 560.500h30" stroke="#00f000" strokeWidth="2" /><path d="M918 558l10 2.500-10 2z" fill="#00b000" />
    <path d="M890 561.500l30 8" stroke="#00f000" strokeWidth="1.500" /><path d="M918 566l7 5-8 0z" fill="#00b000" />
    <path d="M887.500 560v-32" stroke="#0000d8" strokeWidth="1.500" /><path d="M885 529l2.500-9 2.500 9z" fill="#0000c0" />
    <path d="M888 560l7-32" stroke="#0000d8" strokeWidth="1.500" /><path d="M893 529l4.500-7 .5 9z" fill="#0000c0" />
    <circle cx="887.500" cy="560.500" r="3" fill="#d00000" />
    <g fontFamily={arial} fontSize="11">
      <text x="885" y="516" fill="#0000e0">z</text><text x="898" y="516" fill="#0000e0">v</text>
      <text x="935" y="565" fill="#00e800">y</text><text x="933" y="578" fill="#00e800">u</text>
    </g>
  </svg>
);

const rows: [string, string, string, string, string][] = [
  ['Querschnittsfläche', 'A', '', '7.43', ''],
  ['', 'A', 'geom', '7.43', 'Geometrische Querschnittsfläche (nicht ideel)'],
  ['Schubflächen', 'A', 'y', '0.70', ''],
];
const sheets = ['Effektive Breiten nach EN 1993-1-3', 'Querschnittswerte Ersatzdruckstab', 'Effektive Querschnittswerte', 'Effektive statische Momente', 'Effektive Flächenmomente', 'Spannungen auf dem effektiven Querschnitt'];

export default function App() {
  return (
    <Shell>
      <Global />
      <TitleBar>
        <svg width="16" height="18" viewBox="0 0 16 18" fill="none" aria-hidden="true">
          <path d="M0 5l4-3h12v4l-4 2H0z" fill="#b9bcc0" stroke="#666" strokeWidth=".6" /><path d="M3 7h4v9H3z" fill="#8e9196" /><path d="M0 5h12v3" stroke="#e8e8e8" />
          <text x="8" y="15" fontFamily={arial} fontWeight="700" fontSize="12" fill="#f0a820">g</text>
        </svg>
        <Title>DUENQ 9.01.01 x64 - [Z-Profil]</Title>
        <WinButton aria-label="Minimieren"><svg width="10" height="10"><path d="M0 5.500h10" stroke="#fff" /></svg></WinButton>
        <WinButton aria-label="Wiederherstellen"><svg width="10" height="10" fill="none"><path d="M.5 2.500h7v7h-7zM2.500 2V.5h7v7H8" stroke="#fff" /></svg></WinButton>
        <WinButton aria-label="Schließen" $w={48}><Cross s={11} c="#fff" /></WinButton>
      </TitleBar>
      <MenuBar>
        <Grip />
        <svg width="16" height="12" viewBox="0 0 16 12" fill="none" aria-hidden="true"><path d="M0 0h16v12H0z" fill="#1c2c6c" /><path d="M0 7.500h16M6.500 1v10M6.500 2L1 7M6.500 2l4 5M10.500 3l5 4M10.500 3v8" stroke="#fff" /></svg>
        <MenuItems>
          {menu.map(([a, b, c]) => <MenuItem key={a + b + c}>{a}<u>{b}</u>{c}</MenuItem>)}
        </MenuItems>
        <WinButton $w={14} aria-label="Fenster minimieren"><svg width="8" height="9"><path d="M1 7.500h6" stroke="#555" strokeWidth="1.500" /></svg></WinButton>
        <WinButton $w={14} aria-label="Fenster wiederherstellen"><svg width="8" height="9" fill="none"><path d="M.5 3.500h5v4h-5zM2.500 3V1.500h5V6H6" stroke="#777" /></svg></WinButton>
        <WinButton $w={14} aria-label="Fenster schließen"><Cross s={8} /></WinButton>
      </MenuBar>
      <ToolRow>
        <Bar>
          <Grip />
          <Tools items="new open cabinet save notes print preview | undo redo para ellipse ring boxcur notewin | *list *table | loadcase" />
          <Picker value="LF1 - Mu" w={153} label="Lastfall" next />
          <Tools items="*eye *xxx | glasses abwin abacus" />
        </Bar>
        <Bar>
          <Grip />
          <Tools items="handgrid cross | copy rotate mirror nodes info geardoc gears" />
        </Bar>
      </ToolRow>
      <ToolRow>
        <Bar $pad={1}>
          <Grip />
          <Tools items="node line poly ^ tri1 tri2 ibeam | dim ^ arrowxx | frame" />
        </Bar>
        <Bar $pad={0}>
          <Grip />
          <Tools items="hand zoomwin zoomx scope ^ ired" />
        </Bar>
        <Bar $pad={2}>
          <Grip />
          <Tools items="su sv | om som | *sx tau sigv pct pl ^ | plates oval *legend *bracket rainbow ^" />
          <Picker value="Stab: 1" w={154} label="Stab" />
          <Picker value="Stelle: 0.0" w={154} label="Stelle" />
        </Bar>
      </ToolRow>
      <Main>
        <Side>
          <SideBox>
            <SideHead>
              <h2>Projekt-Navigator - Ergebnisse</h2>
              <PlainBtn aria-label="Anheften"><Pin /></PlainBtn>
              <PlainBtn aria-label="Schließen"><Cross /></PlainBtn>
            </SideHead>
            <Tree>
              <Row>
                <ExpCell $left={7}><Expander aria-label="Zuklappen" /></ExpCell>
                <Check type="checkbox" id="root-node" />
                <Label htmlFor="root-node" $sel><Profile /><span>DUENQ</span></Label>
              </Row>
              {tree.map((g, gi) => (
                <React.Fragment key={g.name}>
                  <Row>
                    <ExpCell $left={26}><Expander aria-label="Zuklappen" /></ExpCell>
                    <Check type="checkbox" id={`g${gi}`} />
                    <Label htmlFor={`g${gi}`}><Profile /><span>{g.name}</span></Label>
                  </Row>
                  {g.items.map(([t, sub], i) => (
                    <Row key={i}>
                      <Guide $w={19} />
                      <Guide $w={19} $v={gi < tree.length - 1 ? 'full' : 'none'} />
                      <Guide $w={24} $v={i < g.items.length - 1 ? 'full' : 'half'} $h />
                      <Radio type="radio" name="result" id={`r${gi}-${i}`} defaultChecked={gi === 3 && i === 0} />
                      <Label htmlFor={`r${gi}-${i}`}><Profile /><span>{t}{sub && <sub>{sub}</sub>}</span></Label>
                    </Row>
                  ))}
                </React.Fragment>
              ))}
            </Tree>
            <HScroll>
              <Drop aria-label="Nach links"><svg width="6" height="9" fill="none"><path d="M5 1L1 4.500 5 8" stroke="#505050" strokeWidth="1.600" /></svg></Drop>
              <Thumb />
              <Spacer />
              <Drop aria-label="Nach rechts"><svg width="6" height="9" fill="none"><path d="M1 1l4 3.500L1 8" stroke="#505050" strokeWidth="1.600" /></svg></Drop>
            </HScroll>
          </SideBox>
          <SideTabs>
            <SideTab>{icons.daten}Daten</SideTab>
            <SideTab>{icons.zeigen}Zeigen</SideTab>
            <SideTab>{icons.ansicht}Ansic...</SideTab>
            <SideTab $on>{icons.erge}Erge...</SideTab>
          </SideTabs>
        </Side>
        <Right>
          <Canvas>
            <Section />
            <CanvasNote>Spannungen sigma-x [N/mm^2]<br />LF1 : Mu</CanvasNote>
            <CanvasNote $bottom>Max sigma-x: 347.6, Min sigma-x: -401.2 N/mm^2</CanvasNote>
            <Floating>
              <FloatInner>
                <FloatHead><h2>Panel</h2><PlainBtn aria-label="Schließen"><Cross c="#777" /></PlainBtn></FloatHead>
                <FloatBody>
                  <FloatName>Spannungen</FloatName>
                  <FloatName>σ<sub>x</sub> [N/mm<sup>2</sup>]</FloatName>
                  <LegendBox>
                    <Swatches>{legendColors.map(c => <Swatch key={c} $c={c} />)}</Swatches>
                    <Values>{legendValues.map(v => <li key={v}>{v}</li>)}</Values>
                  </LegendBox>
                  <MinMax><dt><span>Max</span>:</dt><dd>347.6</dd><dt><span>Min</span>:</dt><dd>-401.2</dd></MinMax>
                  <FindBtn aria-label="Details">{icons.find}</FindBtn>
                </FloatBody>
                <FloatTabs>
                  <FloatTab $on aria-label="Farbskala">{icons.colors}</FloatTab>
                  <FloatTab aria-label="Faktoren">{icons.scale}</FloatTab>
                  <FloatTab aria-label="Filter">{icons.micro}</FloatTab>
                </FloatTabs>
              </FloatInner>
            </Floating>
          </Canvas>
          <Dock>
            <DockHead>
              <h2>5.7 Effektive Querschnittswerte</h2>
              <PlainBtn aria-label="Anheften"><Pin /></PlainBtn>
              <PlainBtn aria-label="Schließen"><Cross /></PlainBtn>
            </DockHead>
            <DockBar>
              <Tools items="t1 t2 t3 t4 *bracket | left right | *jump1 *jump2 | grid | funnel | ~bars | excel | calc" />
              <Picker value="LF1 - Mu" w={134} label="Lastfall" next />
              <Picker value="Stab: 1" w={134} label="Stab" />
              <Picker value="Stelle: 0.0 mm" w={134} label="Stelle" />
            </DockBar>
            <GridWrap>
              <Table>
                <colgroup><col width="45" /><col width="192" /><col width="72" /><col width="84" /><col width="60" /><col /></colgroup>
                <thead>
                  <tr><Corner rowSpan={2} aria-label="Zeile" /><Letter $on>A</Letter><Letter>B</Letter><Letter>C</Letter><Letter>D</Letter><Letter>E</Letter></tr>
                  <tr><HeadCell>Beschreibung</HeadCell><HeadCell>Symbol</HeadCell><HeadCell>Wert</HeadCell><HeadCell>Einheit</HeadCell><HeadCell>Kommentar</HeadCell></tr>
                </thead>
                <tbody>
                  {rows.map(([d, s, sub, v, k], i) => (
                    <tr key={i}><RowHead $on={i === 0} /><td>{d}</td><td>{s}{sub && <sub>{sub}</sub>}</td><Num>{v}</Num><td>cm<sup>2</sup></td><td>{k}</td></tr>
                  ))}
                </tbody>
              </Table>
              <VScroll>
                <svg width="9" height="6" fill="none"><path d="M1 5l3.500-4L8 5" stroke="#505050" strokeWidth="1.800" /></svg>
                <VThumb />
                <svg width="9" height="6" fill="none"><path d="M1 1l3.500 4L8 1" stroke="#505050" strokeWidth="1.800" /></svg>
              </VScroll>
            </GridWrap>
            <SheetTabs>{sheets.map((s, i) => <SheetTab key={s} $on={i === 2}>{s}</SheetTab>)}</SheetTabs>
            <DockFoot />
          </Dock>
        </Right>
      </Main>
      <Status>
        <StatusText>Arbeitsebene</StatusText>
        <Mode $w={37}>FANG</Mode>
        <Mode $w={48} $up>RASTER</Mode>
        <Mode $w={50}>KARTES</Mode>
        <Mode $w={46}>OFANG</Mode>
        <Mode $w={49}>HLINIEN</Mode>
        <Mode $w={28}>DXF</Mode>
        <Coord $w={154} $pad={85}>KS: Globales '</Coord>
        <Coord $w={74} $pad={2}>Y:   90.8 mm</Coord>
        <Coord $w={73} $pad={2}>Z:   32.9 mm</Coord>
      </Status>
    </Shell>
  );
}
